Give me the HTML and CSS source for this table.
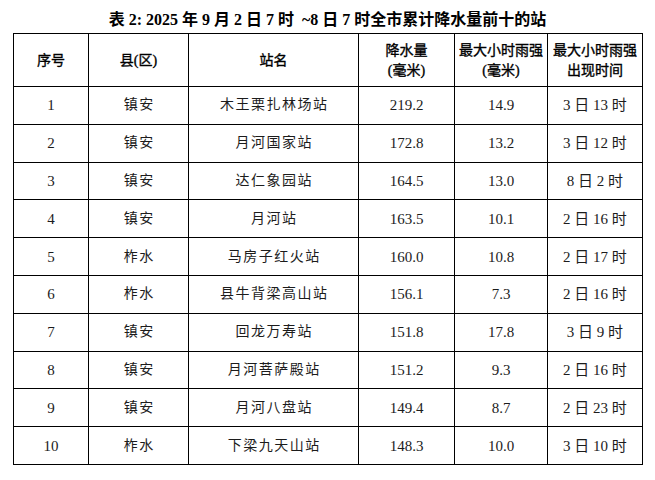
FILE: index.html
```html
<!DOCTYPE html>
<html lang="zh">
<head>
<meta charset="utf-8">
<link rel="stylesheet" href="styles.css">
</head>
<body>
<div class="title">表 2: 2025 年 9 月 2 日 7 时 &nbsp;~8 日 7 时全市累计降水量前十的站</div>
<table class="rain">
<colgroup>
<col class="c1"><col class="c2"><col class="c3"><col class="c4"><col class="c5"><col class="c6">
</colgroup>
<thead>
<tr>
<th>序号</th>
<th>县(区)</th>
<th>站名</th>
<th>降水量<br>(毫米)</th>
<th>最大小时雨强<br>(毫米)</th>
<th>最大小时雨强<br>出现时间</th>
</tr>
</thead>
<tbody>
<tr><td>1</td><td class="cjk">镇安</td><td class="cjk">木王栗扎林场站</td><td>219.2</td><td>14.9</td><td>3 日 13 时</td></tr>
<tr><td>2</td><td class="cjk">镇安</td><td class="cjk">月河国家站</td><td>172.8</td><td>13.2</td><td>3 日 12 时</td></tr>
<tr><td>3</td><td class="cjk">镇安</td><td class="cjk">达仁象园站</td><td>164.5</td><td>13.0</td><td>8 日 2 时</td></tr>
<tr><td>4</td><td class="cjk">镇安</td><td class="cjk">月河站</td><td>163.5</td><td>10.1</td><td>2 日 16 时</td></tr>
<tr><td>5</td><td class="cjk">柞水</td><td class="cjk">马房子红火站</td><td>160.0</td><td>10.8</td><td>2 日 17 时</td></tr>
<tr><td>6</td><td class="cjk">柞水</td><td class="cjk">县牛背梁高山站</td><td>156.1</td><td>7.3</td><td>2 日 16 时</td></tr>
<tr><td>7</td><td class="cjk">镇安</td><td class="cjk">回龙万寿站</td><td>151.8</td><td>17.8</td><td>3 日 9 时</td></tr>
<tr><td>8</td><td class="cjk">镇安</td><td class="cjk">月河菩萨殿站</td><td>151.2</td><td>9.3</td><td>2 日 16 时</td></tr>
<tr><td>9</td><td class="cjk">镇安</td><td class="cjk">月河八盘站</td><td>149.4</td><td>8.7</td><td>2 日 23 时</td></tr>
<tr><td>10</td><td class="cjk">柞水</td><td class="cjk">下梁九天山站</td><td>148.3</td><td>10.0</td><td>3 日 10 时</td></tr>
</tbody>
</table>
</body>
</html>
```
FILE: styles.css
```css
html, body {
  margin: 0;
  padding: 0;
  background: #fff;
}
body {
  font-family: "Liberation Serif", "Noto Sans CJK SC", serif;
  color: #1c1c1c;
}
.title {
  box-sizing: border-box;
  height: 33px;
  padding-top: 9px;
  line-height: 22px;
  font-size: 16px;
  font-weight: bold;
  color: #000;
  text-align: center;
  white-space: pre;
}
.rain {
  margin-left: 13px;
  width: 630px;
  border-collapse: collapse;
  table-layout: fixed;
}
.c1 { width: 75px; }
.c2 { width: 100px; }
.c3 { width: 170px; }
.c4 { width: 96px; }
.c5 { width: 93px; }
.c6 { width: 95px; }
.rain th, .rain td {
  border: 1px solid #000;
  padding: 0;
  text-align: center;
  vertical-align: middle;
}
.rain th {
  height: 50px;
  font-size: 14px;
  line-height: 20px;
  font-weight: normal;
  color: #000;
  -webkit-text-stroke: 0.35px #000;
  padding-top: 2px;
}
.rain td {
  height: 36.8px;
  font-size: 15px;
  line-height: 20px;
}
.rain td.cjk {
  font-size: 14px;
  letter-spacing: 1.5px;
  text-indent: 1.5px;
}
```
